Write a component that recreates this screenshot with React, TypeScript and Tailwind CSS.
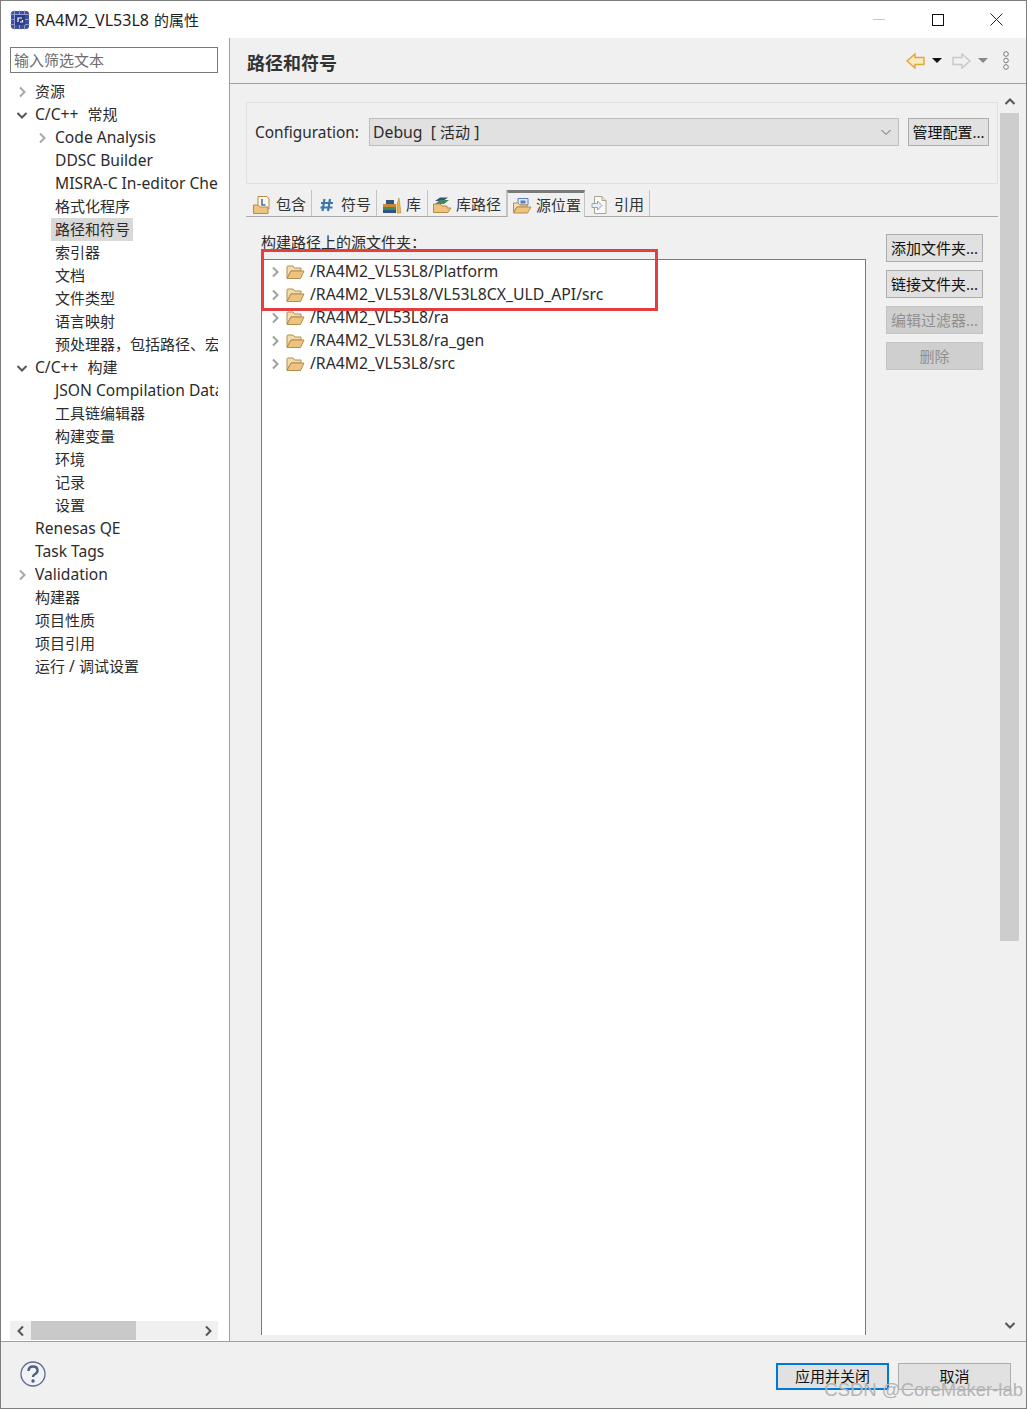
import { ReactNode } from 'react';

const FONT = '"Noto Sans", "Noto Sans CJK SC", sans-serif';

type TreeItem = { label: string; depth: number; arrow?: 'right' | 'down'; selected?: boolean };

const treeItems: TreeItem[] = [
  { label: '资源', depth: 0, arrow: 'right' },
  { label: 'C/C++ 常规', depth: 0, arrow: 'down' },
  { label: 'Code Analysis', depth: 1, arrow: 'right' },
  { label: 'DDSC Builder', depth: 1 },
  { label: 'MISRA-C In-editor Checker', depth: 1 },
  { label: '格式化程序', depth: 1 },
  { label: '路径和符号', depth: 1, selected: true },
  { label: '索引器', depth: 1 },
  { label: '文档', depth: 1 },
  { label: '文件类型', depth: 1 },
  { label: '语言映射', depth: 1 },
  { label: '预处理器，包括路径、宏等', depth: 1 },
  { label: 'C/C++ 构建', depth: 0, arrow: 'down' },
  { label: 'JSON Compilation Database', depth: 1 },
  { label: '工具链编辑器', depth: 1 },
  { label: '构建变量', depth: 1 },
  { label: '环境', depth: 1 },
  { label: '记录', depth: 1 },
  { label: '设置', depth: 1 },
  { label: 'Renesas QE', depth: 0 },
  { label: 'Task Tags', depth: 0 },
  { label: 'Validation', depth: 0, arrow: 'right' },
  { label: '构建器', depth: 0 },
  { label: '项目性质', depth: 0 },
  { label: '项目引用', depth: 0 },
  { label: '运行 / 调试设置', depth: 0 },
];

const folders = [
  '/RA4M2_VL53L8/Platform',
  '/RA4M2_VL53L8/VL53L8CX_ULD_API/src',
  '/RA4M2_VL53L8/ra',
  '/RA4M2_VL53L8/ra_gen',
  '/RA4M2_VL53L8/src',
];

// latin text sits a little larger than the CJK text in the original
function TreeLabel({ text }: { text: string }) {
  const runs = text.split(/([\x00-\x7F]+)/).filter(Boolean);
  return (
    <>
      {runs.map((run, i) =>
        /^[\x00-\x7F]/.test(run) ? (
          <span key={i} className={`text-[15.6px] ${run.startsWith('C/C') && run.endsWith(' ') ? 'pr-[5px]' : ''}`}>
            {run}
          </span>
        ) : (
          <span key={i}>{run}</span>
        ),
      )}
    </>
  );
}

function Chevron({ dir, color = '#a0a0a0', width = 2 }: { dir: 'right' | 'down' | 'left' | 'up'; color?: string; width?: number }) {
  const d = {
    right: 'M4 1.5 L8.5 6 L4 10.5',
    left: 'M8 1.5 L3.5 6 L8 10.5',
    down: 'M1.5 4 L6 8.5 L10.5 4',
    up: 'M1.5 8 L6 3.5 L10.5 8',
  }[dir];
  return (
    <svg width="12" height="12" viewBox="0 0 12 12" fill="none" className="shrink-0">
      <path d={d} stroke={color} strokeWidth={width} />
    </svg>
  );
}

function OpenFolder() {
  return (
    <svg width="20" height="16" viewBox="0 0 20 16" className="shrink-0">
      <path d="M2 14 L2 3 Q2 2 3 2 L8 2 L9.5 4 L16 4 L16 7 L6 7 L2 14Z" fill="#f3dcae" stroke="#b48d4f" strokeWidth="1" />
      <path d="M2 14.5 L6 7 L19 7 L15.5 14.5Z" fill="#eec27f" stroke="#b48d4f" strokeWidth="1" />
    </svg>
  );
}

function ChipIcon() {
  return (
    <svg width="20" height="20" viewBox="0 0 20 20" className="shrink-0">
      <rect x="1" y="1" width="18" height="18" rx="3" fill="#3c4f9c" />
      <rect x="0.5" y="4" width="19" height="1" fill="#8e9ad0" />
      <rect x="0.5" y="9" width="19" height="1" fill="#8e9ad0" />
      <rect x="0.5" y="14" width="19" height="1" fill="#8e9ad0" />
      <rect x="4" y="0.5" width="1" height="19" fill="#8e9ad0" />
      <rect x="9" y="0.5" width="1" height="19" fill="#8e9ad0" />
      <rect x="14" y="0.5" width="1" height="19" fill="#8e9ad0" />
      <rect x="5" y="5" width="10" height="10" fill="#2c3c86" />
      <path d="M8 12 L8 8 L12 8 M10 12 L12.5 12 L12.5 10" stroke="#ffffff" strokeWidth="1.2" fill="none" />
    </svg>
  );
}

function TabIconInclude() {
  return (
    <svg width="20" height="20" viewBox="0 0 20 20" className="shrink-0">
      <path d="M6 1.5 L15 1.5 L17 4 L17 14 L6 14Z" fill="#fdf8ec" stroke="#b48d4f" />
      <path d="M1.5 18.5 L1.5 10 L6 10 L8 12 L16 12 L16 18.5Z" fill="#eec27f" stroke="#b48d4f" />
      <path d="M10 4 L10 10 L13.5 10" stroke="#4a6da8" strokeWidth="1.6" fill="none" />
    </svg>
  );
}

function TabIconHash() {
  return (
    <svg width="16" height="16" viewBox="0 0 16 16" className="shrink-0">
      <path d="M5.5 2 L3.5 14 M11 2 L9 14 M2 6 L14 6 M1.5 10.5 L13.5 10.5" stroke="#3a78ac" strokeWidth="2.2" fill="none" />
    </svg>
  );
}

function TabIconLib() {
  return (
    <svg width="20" height="18" viewBox="0 0 20 18" className="shrink-0">
      <rect x="1" y="8" width="13" height="3" fill="#c58a32" />
      <rect x="1" y="11" width="13" height="3" fill="#3f8a5c" />
      <rect x="1" y="14" width="13" height="3" fill="#34527f" />
      <path d="M15 17 L15 8 L17 2 L19 17Z" fill="#e9b646" stroke="#a8812f" strokeWidth="0.5" />
      <rect x="4" y="4" width="8" height="4" fill="#34527f" />
    </svg>
  );
}

function TabIconLibPath() {
  return (
    <svg width="20" height="18" viewBox="0 0 20 18" className="shrink-0">
      <path d="M3 5 L8 1.5 L16 1.5 L11 5Z" fill="#34527f" />
      <path d="M3 8 L8 4 L17 4 L12 8Z" fill="#3f8a5c" />
      <path d="M1.5 16.5 L1.5 8 L8 8 L10 10 L15 10 L15 12 L19 12 L16 16.5Z" fill="#eec27f" stroke="#b48d4f" />
    </svg>
  );
}

function TabIconSource() {
  return (
    <svg width="20" height="18" viewBox="0 0 20 18" className="shrink-0">
      <path d="M6 1.5 L16 1.5 L16 8 L6 8Z" fill="#e6ecf6" stroke="#5a7eb4" />
      <rect x="8.5" y="3.5" width="5" height="3" fill="#5a7eb4" />
      <path d="M1.5 15 L1.5 6 L6 6 L8 8 L15 8 L15 10 L5 10 L1.5 15Z" fill="#f3dcae" stroke="#b48d4f" />
      <path d="M1.5 16 L5 10 L19 10 L15.5 16Z" fill="#eec27f" stroke="#b48d4f" />
    </svg>
  );
}

function TabIconRef() {
  return (
    <svg width="18" height="20" viewBox="0 0 18 20" className="shrink-0">
      <path d="M3.5 1.5 L11 1.5 L15 5.5 L15 18.5 L3.5 18.5Z" fill="#fafafa" stroke="#a8a58c" />
      <path d="M11 1.5 L11 5.5 L15 5.5" fill="#e8e6d6" stroke="#a8a58c" />
      <path d="M1 8.5 L6.5 8.5 L6.5 6 L11 10.5 L6.5 15 L6.5 12.5 L1 12.5Z" fill="#e8eef4" stroke="#8ca4b8" />
    </svg>
  );
}

function Tab({ icon, label, active, width, wide }: { icon: ReactNode; label: string; active?: boolean; width: string; wide?: boolean }) {
  return (
    <div
      className={
        active
          ? `${width} h-[27px] pt-[1px] flex items-center bg-[#f0f0f0] border-t-[3px] border-t-[#7a7a7a] border-x border-x-[#c4c4c4] -mb-px relative`
          : `${width} h-[26px] pt-[3px] flex items-center border-r border-r-[#c4c4c4]`
      }
    >
      <div className={`${wide ? 'w-[29px]' : 'w-[28px]'} shrink-0 flex justify-center`}>{icon}</div>
      <span className="text-[15px] text-[#333] leading-none whitespace-nowrap">{label}</span>
    </div>
  );
}

function SideButton({ label, disabled }: { label: string; disabled?: boolean }) {
  return (
    <div
      className={
        disabled
          ? 'h-[28px] w-[97px] flex items-center justify-center bg-[#cfcfcf] border border-[#c4c4c4] text-[#8f8f8f] text-[15px] leading-none whitespace-nowrap'
          : 'h-[28px] w-[97px] flex items-center justify-center bg-[#e1e1e1] border border-[#adadad] text-[#111] text-[15px] leading-none whitespace-nowrap'
      }
    >
      {label}
    </div>
  );
}

export default function App() {
  return (
    <div
      className="relative w-[1027px] h-[1409px] flex flex-col bg-white border border-[#7d7d7d] overflow-hidden text-[#2b2b2b]"
      style={{ fontFamily: FONT }}
    >
      {/* title bar */}
      <div className="h-[37px] shrink-0 flex items-center pl-[9px] bg-white">
        <ChipIcon />
        <span className="ml-[5px] text-[15px] text-[#222] whitespace-nowrap">
          <span className="text-[16px] pr-[1px]">RA4M2_VL53L8 </span>的属性
        </span>
        <div className="ml-auto flex items-center h-full">
          <div className="w-[59px] flex justify-center">
            <div className="w-[12px] h-px bg-[#c8c8c8]" />
          </div>
          <div className="w-[59px] flex justify-center">
            <div className="w-[12px] h-[12px] border border-[#111]" />
          </div>
          <div className="w-[59px] flex justify-center">
            <svg width="13" height="13" viewBox="0 0 13 13">
              <path d="M0.5 0.5 L12.5 12.5 M12.5 0.5 L0.5 12.5" stroke="#222" strokeWidth="1" />
            </svg>
          </div>
        </div>
      </div>

      <div className="flex-1 flex min-h-0">
        {/* left tree */}
        <div className="w-[229px] shrink-0 bg-white border-r border-r-[#a0a0a0] flex flex-col pl-[9px] pr-[11px]">
          <div className="h-[26px] mt-[9px] border border-[#7a7a7a] flex items-center pl-[3px] text-[15px] text-[#6d6d6d] whitespace-nowrap">
            输入筛选文本
          </div>
          <div className="mt-[7px] flex-1 overflow-hidden">
            {treeItems.map((item) => (
              <div key={item.label} className={`h-[23px] flex items-center ${item.depth === 1 ? 'pl-[20px]' : ''}`}>
                <div className="w-[25px] shrink-0 flex justify-center pr-[2px]">
                  {item.arrow && (
                    <Chevron
                      dir={item.arrow}
                      color={item.arrow === 'down' ? '#555' : '#a8a8a8'}
                    />
                  )}
                </div>
                <span
                  className={`text-[15px] leading-[23px] whitespace-nowrap ${item.selected ? 'bg-[#d9d9d9] pl-[4px] pr-[3px] -ml-[4px]' : ''}`}
                >
                  <TreeLabel text={item.label} />
                </span>
              </div>
            ))}
          </div>
          <div className="h-[19px] mb-px flex items-center bg-[#f0f0f0] justify-between">
            <div className="w-[21px] flex justify-center">
              <Chevron dir="left" color="#555" />
            </div>
            <div className="w-[105px] h-full bg-[#c9c9c9]" />
            <div className="flex-1" />
            <div className="w-[21px] flex justify-center">
              <Chevron dir="right" color="#555" />
            </div>
          </div>
        </div>

        {/* right panel */}
        <div className="flex-1 min-w-0 flex flex-col bg-[#f0f0f0]">
          <div className="h-[46px] shrink-0 flex items-center pl-[17px] border-b border-b-[#a0a0a0]">
            <span className="text-[18px] font-bold text-[#333] whitespace-nowrap mt-[6px]">路径和符号</span>
            <div className="ml-auto flex items-center pr-[16px]">
              <svg width="20" height="16" viewBox="0 0 20 16">
                <path d="M1 8 L9 1 L9 4.5 L18 4.5 L18 11.5 L9 11.5 L9 15Z" fill="#fbeabf" stroke="#dfa63c" strokeWidth="1.4" />
              </svg>
              <svg width="10" height="5" viewBox="0 0 10 5" className="ml-[6px]">
                <path d="M0 0 L10 0 L5 5Z" fill="#111" />
              </svg>
              <svg width="20" height="16" viewBox="0 0 20 16" className="ml-[9px]">
                <path d="M19 8 L11 1 L11 4.5 L2 4.5 L2 11.5 L11 11.5 L11 15Z" fill="#f0f0f0" stroke="#c8c8c8" strokeWidth="1.4" />
              </svg>
              <svg width="10" height="5" viewBox="0 0 10 5" className="ml-[7px]">
                <path d="M0 0 L10 0 L5 5Z" fill="#888" />
              </svg>
              <svg width="8" height="19" viewBox="0 0 8 19" className="ml-[14px]">
                <circle cx="4" cy="3" r="2.3" fill="#fff" stroke="#777" />
                <circle cx="4" cy="9.5" r="2.3" fill="#fff" stroke="#777" />
                <circle cx="4" cy="16" r="2.3" fill="#fff" stroke="#777" />
              </svg>
            </div>
          </div>

          <div className="flex-1 min-h-0 flex">
            <div className="flex-1 min-w-0 flex flex-col pl-[16px] pt-[18px]">
              {/* configuration group */}
              <div className="h-[82px] shrink-0 bg-[#f0f0f0] border border-[#e0e0e0] flex items-start pl-[8px] pt-[15px]">
                <span className="text-[15.4px] leading-[28px] pt-[1px] whitespace-nowrap">Configuration:</span>
                <div className="ml-[10px] w-[530px] h-[28px] bg-[#e1e1e1] border border-[#bdbdbd] flex items-center pl-[3px] pr-[6px]">
                  <span className="text-[15px] whitespace-nowrap pt-[1px]">
                    <span className="text-[15.8px]">Debug&nbsp;&nbsp;[ </span>活动<span className="text-[15.8px]"> ]</span>
                  </span>
                  <div className="ml-auto">
                    <Chevron dir="down" color="#666" width={1} />
                  </div>
                </div>
                <div className="ml-[9px] w-[81px] h-[28px] bg-[#e1e1e1] border border-[#adadad] flex items-center justify-center text-[15px] text-[#111] whitespace-nowrap">
                  管理配置...
                </div>
              </div>

              {/* tabs */}
              <div className="mt-[6px] h-[27px] shrink-0 flex items-end border-b border-b-[#a8a8a8] pl-[2px]">
                <Tab width="w-[64px]" icon={<TabIconInclude />} label="包含" />
                <Tab width="w-[65px]" wide icon={<TabIconHash />} label="符号" />
                <Tab width="w-[51px]" wide icon={<TabIconLib />} label="库" />
                <Tab width="w-[79px]" icon={<TabIconLibPath />} label="库路径" />
                <Tab width="w-[78px]" active icon={<TabIconSource />} label="源位置" />
                <Tab width="w-[65px]" wide icon={<TabIconRef />} label="引用" />
              </div>

              {/* source folder list */}
              <div className="flex-1 min-h-0 flex pl-[15px] pb-[6px]">
                <div className="w-[605px] shrink-0 flex flex-col">
                  <div className="h-[42px] shrink-0 text-[15px] leading-[22px] whitespace-nowrap pt-[14px]">
                    构建路径上的源文件夹：
                  </div>
                  <div className="flex-1 bg-white border-t border-x border-[#7a7a7a]">
                    {folders.map((path) => (
                      <div key={path} className="h-[23px] flex items-center pl-[7px]">
                        <Chevron dir="right" color="#a0a0a0" />
                        <div className="ml-[4px]">
                          <OpenFolder />
                        </div>
                        <span className="ml-[5px] text-[15.75px] leading-none whitespace-nowrap">{path}</span>
                      </div>
                    ))}
                  </div>
                </div>
                <div className="ml-[20px] pt-[17px] flex flex-col gap-[8px]">
                  <SideButton label="添加文件夹..." />
                  <SideButton label="链接文件夹..." />
                  <SideButton label="编辑过滤器..." disabled />
                  <SideButton label="删除" disabled />
                </div>
              </div>
            </div>

            {/* vertical scrollbar */}
            <div className="w-[19px] shrink-0 ml-[2px] mr-[7px] pt-[12px] flex flex-col items-center bg-[#f0f0f0]">
              <Chevron dir="up" color="#555" />
              <div className="mt-[5px] w-full h-[828px] bg-[#cdcdcd]" />
              <div className="mt-auto mb-[10px]">
                <Chevron dir="down" color="#555" />
              </div>
            </div>
          </div>
        </div>
      </div>

      {/* footer */}
      <div className="h-[67px] shrink-0 bg-[#f0f0f0] border-t border-t-[#a0a0a0] flex items-center pl-[19px] pr-[15px]">
        <svg width="26" height="26" viewBox="0 0 26 26" className="mb-[2px]">
          <circle cx="13" cy="13" r="12" fill="#f0f2f6" stroke="#5b6a8c" strokeWidth="1.3" />
          <path d="M8.5 10 Q8.5 5.5 13 5.5 Q17.5 5.5 17.5 9.5 Q17.5 12 14.5 13.5 Q13 14.3 13 16" fill="none" stroke="#4e5d80" strokeWidth="2.4" />
          <circle cx="13" cy="20" r="1.7" fill="#4e5d80" />
        </svg>
        <div className="ml-auto flex gap-[9px] mt-[2px]">
          <div className="w-[113px] h-[27px] bg-[#e1e1e1] border-2 border-[#0078d7] flex items-center justify-center text-[15px] text-[#111] whitespace-nowrap">
            应用并关闭
          </div>
          <div className="w-[113px] h-[27px] bg-[#e1e1e1] border border-[#adadad] flex items-center justify-center text-[15px] text-[#111] whitespace-nowrap">
            取消
          </div>
        </div>
      </div>

      {/* red annotation over the list */}
      <div className="absolute left-[260px] top-[248px] w-[397px] h-[62px] border-[3px] border-[#e53e3e] pointer-events-none" />

      {/* watermark */}
      <span
        className="absolute right-[3px] top-[1380px] text-[18.5px] leading-none text-[#b4b4b4] whitespace-nowrap"
        style={{ fontFamily: '"Liberation Sans", sans-serif' }}
      >
        CSDN @CoreMaker-lab
      </span>
    </div>
  );
}
